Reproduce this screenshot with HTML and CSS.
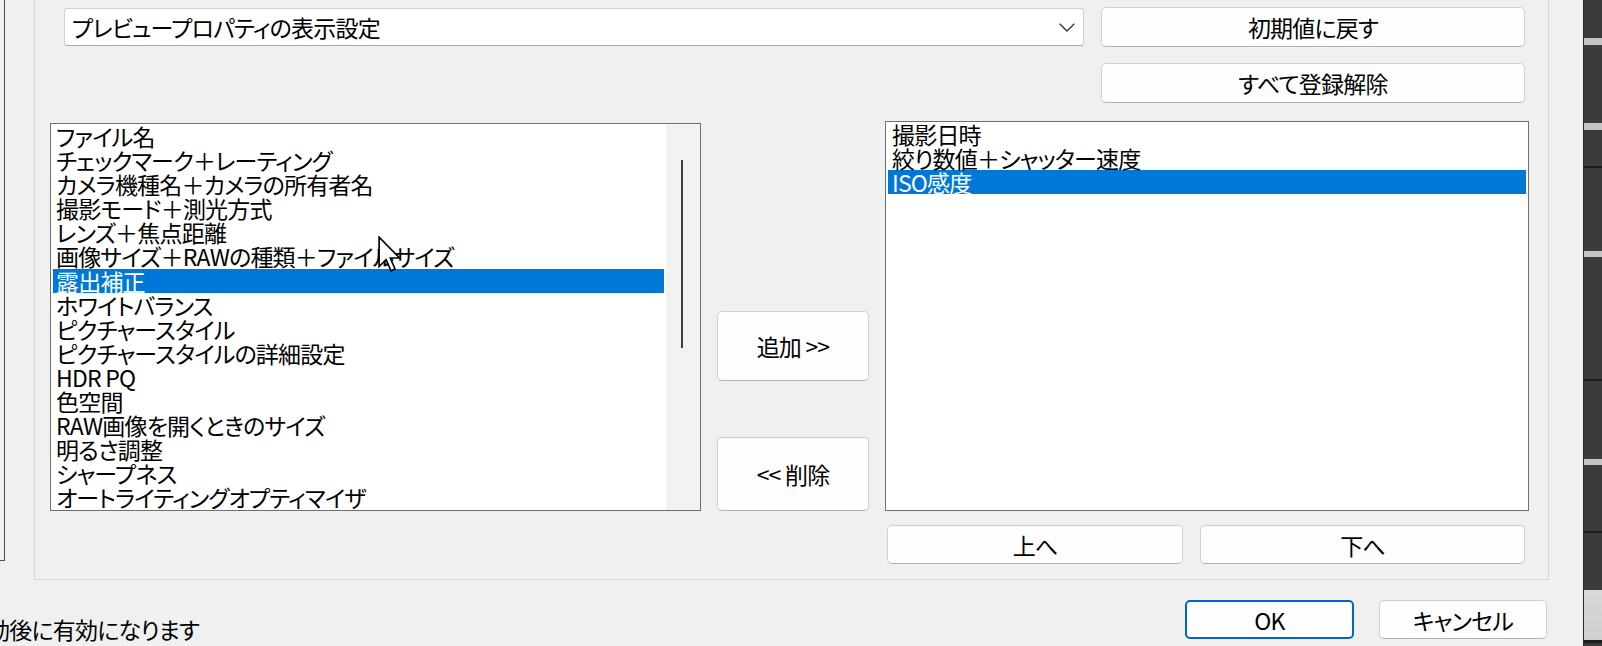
FILE: index.html
```html
<!DOCTYPE html>
<html lang="ja">
<head>
<meta charset="utf-8">
<title>プレビュープロパティの表示設定</title>
<link rel="stylesheet" href="styles.css">
</head>
<body>
<div class="screen">
  <div class="main">
    <div class="top-row">
      <div class="left-pane"></div>
      <section class="group">
        <div class="controls">
          <div class="combo">
            <span class="combo-text">プレビュープロパティの表示設定</span>
            <svg class="chevron" width="16" height="9" viewBox="0 0 16 9"><polyline points="0.7,0.7 8,8 15.3,0.7" fill="none" stroke="#333" stroke-width="1.3"/></svg>
          </div>
          <div class="side-buttons">
            <button class="btn btn-wide">初期値に戻す</button>
            <button class="btn btn-wide">すべて登録解除</button>
          </div>
        </div>
        <div class="lists">
          <div class="listbox listbox-left">
            <ul class="items">
              <li>ファイル名</li>
              <li>チェックマーク＋レーティング</li>
              <li>カメラ機種名＋カメラの所有者名</li>
              <li>撮影モード＋測光方式</li>
              <li>レンズ＋焦点距離</li>
              <li>画像サイズ＋RAWの種類＋ファイルサイズ</li>
              <li class="selected">露出補正</li>
              <li>ホワイトバランス</li>
              <li>ピクチャースタイル</li>
              <li>ピクチャースタイルの詳細設定</li>
              <li>HDR PQ</li>
              <li>色空間</li>
              <li>RAW画像を開くときのサイズ</li>
              <li>明るさ調整</li>
              <li>シャープネス</li>
              <li>オートライティングオプティマイザ</li>
            </ul>
            <div class="scrollbar"><div class="thumb"></div></div>
          </div>
          <div class="move-buttons">
            <button class="btn btn-add">追加 &gt;&gt;</button>
            <button class="btn btn-remove">&lt;&lt; 削除</button>
          </div>
          <div class="right-col">
            <div class="listbox listbox-right">
              <ul class="items">
                <li>撮影日時</li>
                <li>絞り数値＋シャッター速度</li>
                <li class="selected">ISO感度</li>
              </ul>
            </div>
            <div class="order-buttons">
              <button class="btn btn-up">上へ</button>
              <button class="btn btn-down">下へ</button>
            </div>
          </div>
        </div>
      </section>
    </div>
    <div class="footer">
      <p class="note">動後に有効になります</p>
      <div class="dialog-buttons">
        <button class="btn btn-ok">OK</button>
        <button class="btn btn-cancel">キャンセル</button>
      </div>
    </div>
  </div>
  <div class="strip">
    <div class="seg s-dark" style="height:38px"></div>
    <div class="seg s-gray" style="height:7px"></div>
    <div class="seg s-dark" style="height:78px"></div>
    <div class="seg s-gray" style="height:7px"></div>
    <div class="seg s-dark" style="height:36px"></div>
    <div class="seg s-black" style="height:2px"></div>
    <div class="seg s-dark" style="height:83px"></div>
    <div class="seg s-gray" style="height:6px"></div>
    <div class="seg s-dark" style="height:122px"></div>
    <div class="seg s-black" style="height:2px"></div>
    <div class="seg s-dark" style="height:78px"></div>
    <div class="seg s-gray" style="height:6px"></div>
    <div class="seg s-dark" style="height:66px"></div>
    <div class="seg s-black" style="height:2px"></div>
    <div class="seg s-dark" style="height:57px"></div>
    <div class="seg s-light" style="height:50px"></div>
    <div class="seg s-black" style="height:3px"></div>
    <div class="seg s-dark" style="height:3px"></div>
  </div>
</div>
<svg class="cursor" width="22" height="36" viewBox="0 0 12 19.6"><path d="M0.6,0.6 V16.6 L4.4,12.9 L7.1,19 L9.3,18 L6.7,12 H11.8 Z" fill="#fff" stroke="#000" stroke-width="0.9" stroke-linejoin="miter"/></svg>
</body>
</html>
```
FILE: styles.css
```css
* { box-sizing: border-box; }
html, body { margin: 0; padding: 0; }
body {
  width: 1602px;
  height: 646px;
  overflow: hidden;
  position: relative;
  background: #f0f0f0;
  color: #000;
  font-family: "Noto Sans CJK JP", "Noto Sans", sans-serif;
  font-size: 23px;
  letter-spacing: -0.8px;
  font-feature-settings: "palt";
}
.screen { display: flex; height: 646px; }
.main { width: 1583px; display: flex; flex-direction: column; }
.top-row { display: flex; align-items: flex-start; height: 580px; }
.left-pane {
  width: 5px;
  height: 561px;
  border-right: 1px solid #4a4a4a;
  border-bottom: 1px solid #4a4a4a;
}
.group {
  margin-left: 29px;
  width: 1515px;
  height: 580px;
  border: 1px solid #d5d5d5;
  border-top: none;
}
.controls {
  display: flex;
  align-items: flex-start;
  padding-top: 7px;
  margin-left: 29px;
}
.combo {
  width: 1020px;
  height: 38px;
  margin-top: 1px;
  display: flex;
  align-items: center;
  justify-content: space-between;
  padding: 0 8px 0 7px;
  background: #fff;
  border: 1px solid #cfcfcf;
  border-bottom-color: #a9a9a9;
  border-radius: 3px;
  white-space: nowrap;
}
.combo-text { line-height: 24px; }
.chevron { display: block; }
.side-buttons {
  margin-left: 17px;
  width: 424px;
  display: flex;
  flex-direction: column;
  gap: 16px;
}
.btn {
  font: inherit;
  letter-spacing: -0.8px;
  font-feature-settings: "palt";
  color: #000;
  padding: 0;
  margin: 0;
  background: #fdfdfd;
  border: 1px solid #d0d0d0;
  border-bottom-color: #b3b3b3;
  border-radius: 5px;
  line-height: 24px;
  white-space: nowrap;
}
.btn-wide { height: 40px; width: 100%; }
.lists {
  display: flex;
  align-items: flex-start;
  margin-left: 15px;
  margin-top: 18px;
}
.listbox {
  background: #fff;
  border: 1px solid #6f6f6f;
  display: flex;
}
.listbox-left { width: 651px; height: 388px; margin-top: 2px; }
.listbox-right { width: 644px; height: 390px; }
.items {
  list-style: none;
  margin: 0;
  padding: 0 2px;
  flex: 1;
}
.items li {
  height: 24.1px;
  line-height: 24.1px;
  padding-left: 3px;
  white-space: nowrap;
}
.listbox-right .items li { padding-left: 4px; }
.items li.selected { background: #0078d7; color: #fff; }
.scrollbar {
  width: 34px;
  background: #f2f2f2;
  padding-top: 36px;
}
.thumb {
  width: 2px;
  height: 188px;
  margin-left: 15px;
  background: #3c3c3c;
}
.move-buttons {
  margin-left: 16px;
  width: 152px;
  display: flex;
  flex-direction: column;
  padding-top: 190px;
  gap: 56px;
}
.btn-add { height: 70px; }
.btn-remove { height: 74px; }
.right-col { margin-left: 16px; width: 644px; }
.order-buttons {
  display: flex;
  gap: 17px;
  margin-top: 14px;
  padding-left: 2px;
}
.btn-up { width: 296px; height: 39px; }
.btn-down { width: 325px; height: 39px; }
.footer {
  height: 66px;
  display: flex;
  align-items: flex-start;
  justify-content: space-between;
}
.note {
  margin: 37px 0 0 -13px;
  line-height: 24px;
  white-space: nowrap;
}
.dialog-buttons {
  display: flex;
  gap: 25px;
  margin-top: 20px;
  margin-right: 36px;
}
.btn-ok {
  width: 169px;
  height: 39px;
  border: 2px solid #0067c0;
}
.btn-cancel { width: 168px; height: 39px; }
.strip {
  width: 19px;
  height: 646px;
  display: flex;
  flex-direction: column;
  border-left: 1px solid #2a2a2a;
}
.seg { flex: none; }
.s-dark { background: #3b3b3b; }
.s-gray { background: #c4c4c4; }
.s-black { background: #1c1c1c; }
.s-light { background: linear-gradient(#d8d8d8, #cfcfcf); }
.cursor {
  position: absolute;
  left: 378px;
  top: 236px;
}
```
